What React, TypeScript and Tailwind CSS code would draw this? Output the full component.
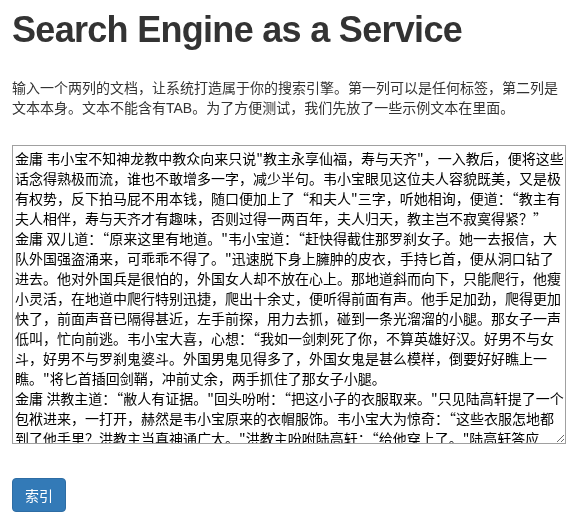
import React from "react";

const SAMPLE = [
  '金庸\t韦小宝不知神龙教中教众向来只说"教主永享仙福，寿与天齐"，一入教后，便将这些话念得熟极而流，谁也不敢增多一字，减少半句。韦小宝眼见这位夫人容貌既美，又是极有权势，反下拍马屁不用本钱，随口便加上了“和夫人"三字，听她相询，便道：“教主有夫人相伴，寿与天齐才有趣味，否则过得一两百年，夫人归天，教主岂不寂寞得紧？”',
  '金庸\t双儿道：“原来这里有地道。"韦小宝道：“赶快得截住那罗刹女子。她一去报信，大队外国强盗涌来，可乖乖不得了。"迅速脱下身上臃肿的皮衣，手持匕首，便从洞口钻了进去。他对外国兵是很怕的，外国女人却不放在心上。那地道斜而向下，只能爬行，他瘦小灵活，在地道中爬行特别迅捷，爬出十余丈，便听得前面有声。他手足加劲，爬得更加快了，前面声音已隔得甚近，左手前探，用力去抓，碰到一条光溜溜的小腿。那女子一声低叫，忙向前逃。韦小宝大喜，心想：“我如一剑刺死了你，不算英雄好汉。好男不与女斗，好男不与罗刹鬼婆斗。外国男鬼见得多了，外国女鬼是甚么模样，倒要好好瞧上一瞧。"将匕首插回剑鞘，冲前丈余，两手抓住了那女子小腿。',
  '金庸\t洪教主道：“敝人有证据。"回头吩咐：“把这小子的衣服取来。"只见陆高轩提了一个包袱进来，一打开，赫然是韦小宝原来的衣帽服饰。韦小宝大为惊奇：“这些衣服怎地都到了他手里？洪教主当真神通广大。"洪教主吩咐陆高轩：“给他穿上了。"陆高轩答应了，便替韦小宝穿上衣服，戴上帽子。',
].join("\n");

export default function App() {
  return (
    <div className="bg-white px-3 text-[#333]">
      <div className="w-[554px] font-['Liberation_Sans','Noto_Sans_CJK_SC',sans-serif]">
        <h1 className="mt-[10px] text-[36px] leading-[40px] font-bold tracking-[-0.7px] text-[#333]">
          Search Engine as a Service
        </h1>
        <p className="mt-[28px] text-[14px] leading-[20px] text-[#333]">
          输入一个两列的文档，让系统打造属于你的搜索引擎。第一列可以是任何标签，第二列是文本本身。文本不能含有TAB。为了方便测试，我们先放了一些示例文本在里面。
        </p>
        <textarea
          className="mt-[27px] block h-[299px] w-[554px] resize border border-[#a0a0a0] bg-white py-[2px] pl-[2px] pr-0 font-['Noto_Sans_CJK_SC','Liberation_Sans',sans-serif] text-[14px] leading-[20px] text-black outline-none [scrollbar-width:none] [tab-size:1]"
          defaultValue={SAMPLE}
          spellCheck={false}
        />
        <button className="mt-[34px] block h-[34px] w-[54px] rounded-[4px] border border-[#2e6da4] bg-[#337ab7] text-[14px] leading-[20px] text-white font-['Noto_Sans_CJK_SC',sans-serif]">
          索引
        </button>
      </div>
    </div>
  );
}
